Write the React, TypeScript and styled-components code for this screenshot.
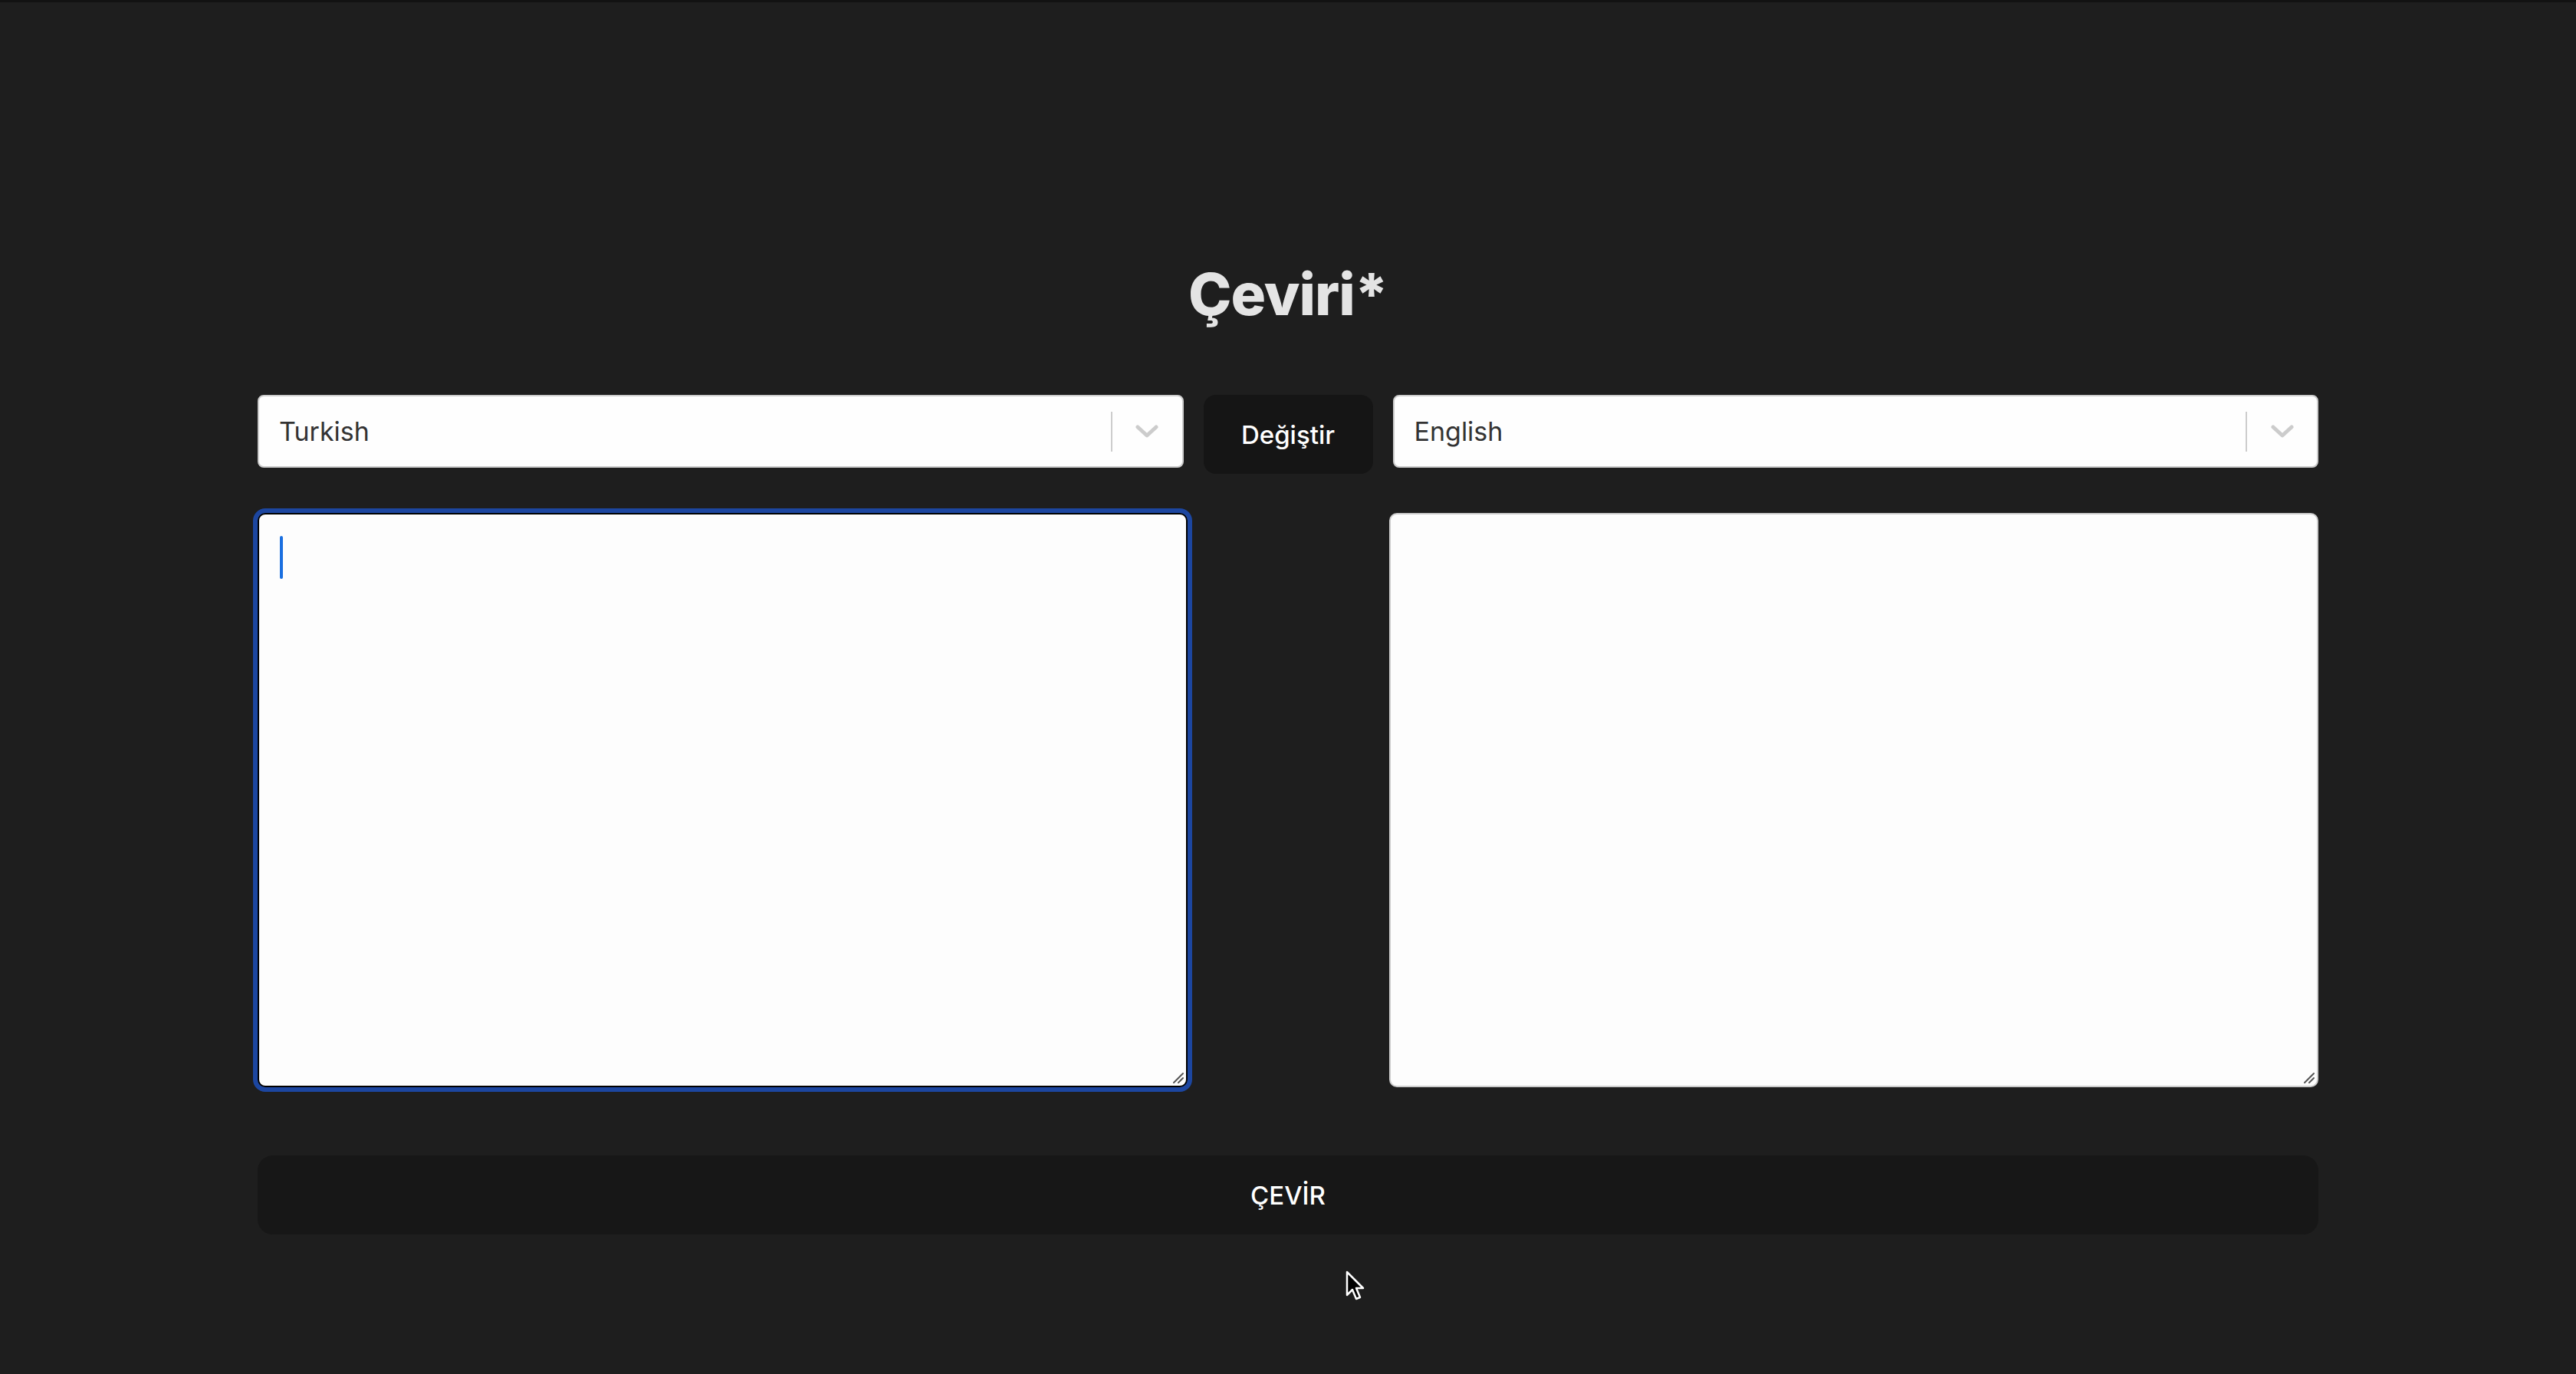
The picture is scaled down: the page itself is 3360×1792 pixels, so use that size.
import React from "react";
import styled, { createGlobalStyle } from "styled-components";

const GlobalStyle = createGlobalStyle`
  html, body {
    margin: 0;
    padding: 0;
    background: #1e1e1e;
    font-family: "Inter", "Noto Sans", sans-serif;
  }
  * { box-sizing: border-box; }
`;

const Page = styled.div`
  position: relative;
  width: 3360px;
  height: 1792px;
  background: #1e1e1e;
  border-top: 3px solid #121212;
  display: flex;
  flex-direction: column;
  align-items: center;
  overflow: hidden;
`;

const Container = styled.div`
  width: 2688px;
  display: flex;
  flex-direction: column;
  padding-top: 330px;
`;

const Title = styled.h1`
  margin: 0 0 82px 0;
  text-align: center;
  font-family: "Inter", "Noto Sans", sans-serif;
  font-weight: 800;
  font-size: 76px;
  line-height: 100px;
  color: #e4e4e4;
  letter-spacing: -1px;
`;

const SelectRow = styled.div`
  display: grid;
  grid-template-columns: 1fr 221px 1fr;
  column-gap: 26px;
  align-items: start;
`;

const SelectBox = styled.div`
  height: 95px;
  background: #fefefe;
  border: 2px solid #cccccc;
  border-radius: 8px;
  display: flex;
  align-items: center;
  padding-left: 26px;
`;

const SelectValue = styled.span`
  flex: 1;
  font-size: 34px;
  color: #333333;
  font-weight: 400;
`;

const Indicators = styled.div`
  display: flex;
  align-items: center;
  height: 100%;
`;

const Separator = styled.span`
  width: 2px;
  height: 52px;
  background: #cccccc;
`;

const Chevron = styled.span`
  width: 91px;
  display: flex;
  justify-content: center;
  align-items: center;
  color: #cccccc;
`;

const SwapButton = styled.button`
  height: 103px;
  border: none;
  border-radius: 16px;
  background: #151515;
  color: #ffffff;
  font-family: "Inter", "Noto Sans", sans-serif;
  font-size: 33px;
  font-weight: 500;
  cursor: pointer;
`;

const AreaRow = styled.div`
  margin-top: 51px;
  display: grid;
  grid-template-columns: 1fr 1fr;
  column-gap: 263px;
`;

const AreaWrap = styled.div`
  position: relative;
`;

const TextArea = styled.textarea<{ $focused?: boolean }>`
  display: block;
  width: 100%;
  height: 749px;
  resize: none;
  background: #fdfdfd;
  border: ${(p) => (p.$focused ? "2px solid #000000" : "2px solid #cccccc")};
  outline: ${(p) => (p.$focused ? "6px solid #1c46a0" : "none")};
  border-radius: 10px;
  padding: 24px;
  font-family: "Inter", "Noto Sans", sans-serif;
  font-size: 33px;
  color: #222;
  caret-color: transparent;
`;

const Caret = styled.span`
  position: absolute;
  left: 29px;
  top: 30px;
  width: 4px;
  height: 56px;
  border-radius: 2px;
  background: #1a6fe0;
`;

const Grip = styled.svg`
  position: absolute;
  right: 4px;
  bottom: 4px;
  pointer-events: none;
`;

const TranslateButton = styled.button`
  margin-top: 89px;
  height: 103px;
  width: 100%;
  border: none;
  border-radius: 20px;
  background: #171717;
  color: #ffffff;
  font-family: "Inter", "Noto Sans", sans-serif;
  font-size: 33px;
  font-weight: 500;
  cursor: pointer;
`;

const Pointer = styled.svg`
  position: absolute;
  left: 1755px;
  top: 1654px;
`;

const ChevronIcon = () => (
  <svg width="30" height="20" viewBox="0 0 30 20">
    <path d="M3 4 L15 15 L27 4" fill="none" stroke="#cccccc" strokeWidth="5" strokeLinecap="round" strokeLinejoin="round" />
  </svg>
);

const ResizeGrip = () => (
  <Grip width="16" height="16" viewBox="0 0 16 16">
    <path d="M2 14 L14 2 M8 14 L14 8" stroke="#555555" strokeWidth="2" strokeLinecap="round" />
  </Grip>
);

const Select = ({ value }: { value: string }) => (
  <SelectBox>
    <SelectValue>{value}</SelectValue>
    <Indicators>
      <Separator />
      <Chevron>
        <ChevronIcon />
      </Chevron>
    </Indicators>
  </SelectBox>
);

export default function App() {
  return (
    <>
      <GlobalStyle />
      <Page>
        <Container>
          <Title>Çeviri*</Title>
          <SelectRow>
            <Select value="Turkish" />
            <SwapButton>Değiştir</SwapButton>
            <Select value="English" />
          </SelectRow>
          <AreaRow>
            <AreaWrap>
              <TextArea $focused />
              <Caret />
              <ResizeGrip />
            </AreaWrap>
            <AreaWrap>
              <TextArea readOnly />
              <ResizeGrip />
            </AreaWrap>
          </AreaRow>
          <TranslateButton>ÇEVİR</TranslateButton>
        </Container>
        <Pointer width="26" height="40" viewBox="0 0 26 40">
          <path d="M2 2 L2 32 L9 25 L14 37 L19 35 L14 23 L23 23 Z" fill="#000" stroke="#fff" strokeWidth="2.5" strokeLinejoin="round" />
        </Pointer>
      </Page>
    </>
  );
}
